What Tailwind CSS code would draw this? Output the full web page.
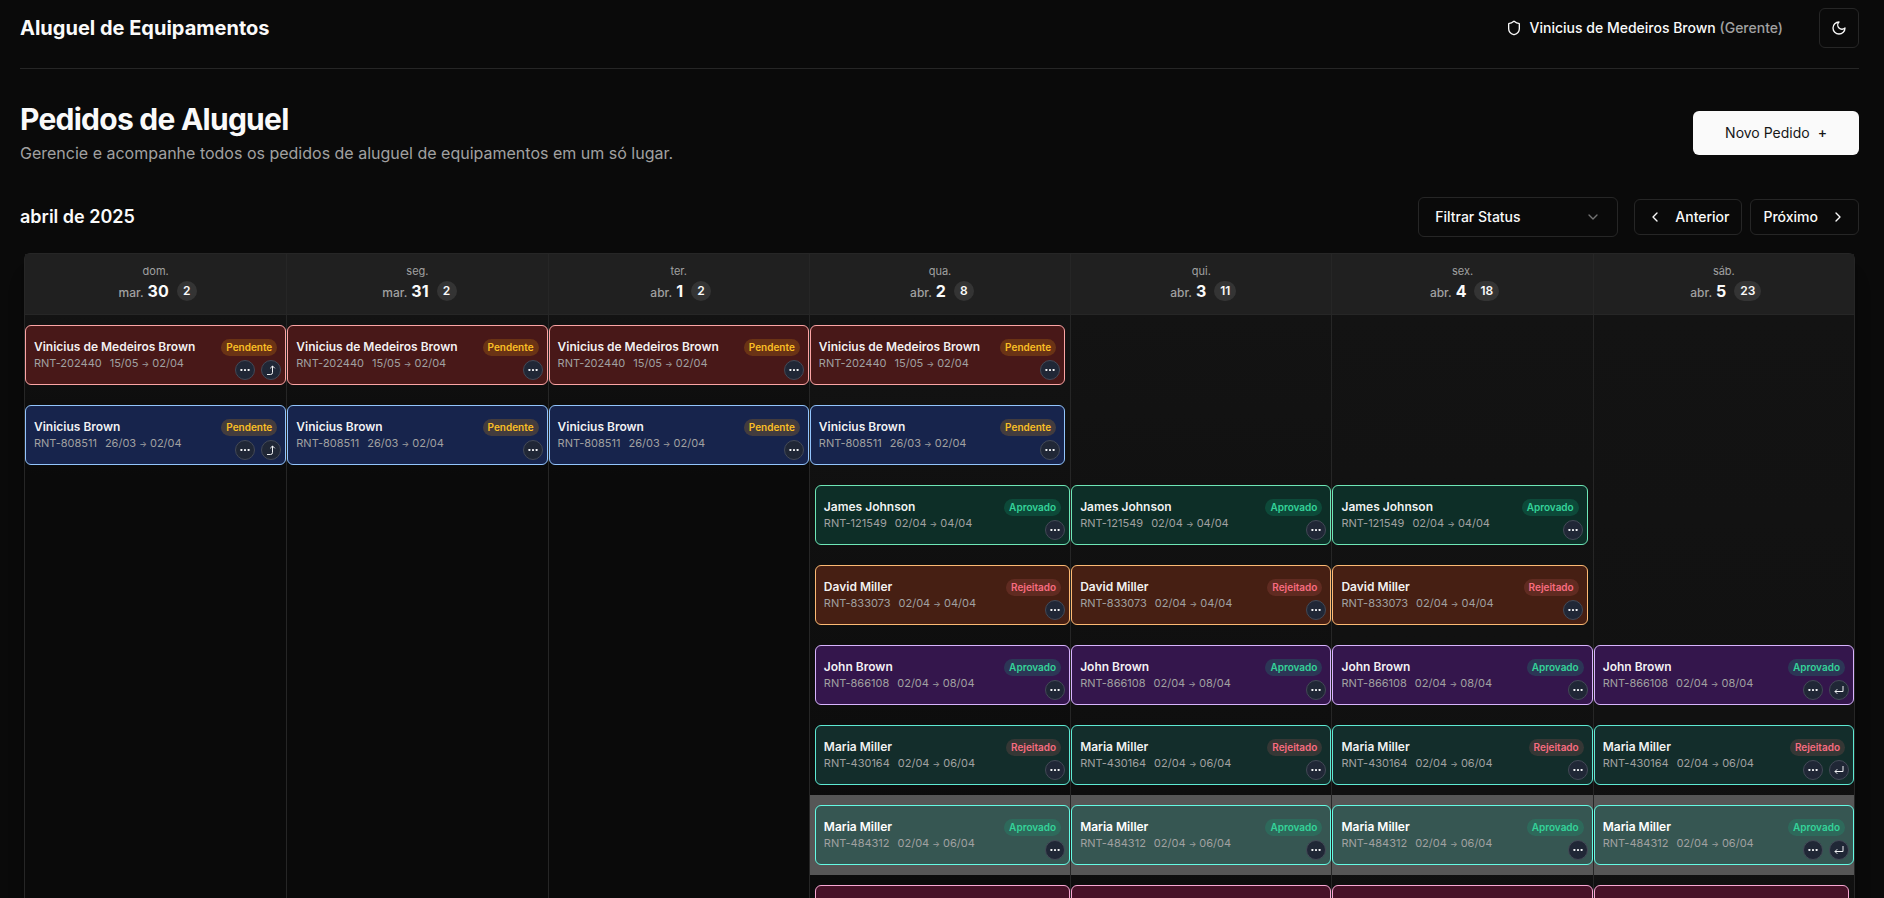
<!DOCTYPE html>
<html lang="pt-BR">
<head>
<meta charset="utf-8">
<title>Aluguel de Equipamentos</title>
<script src="https://cdn.jsdelivr.net/npm/@tailwindcss/browser@4"></script>
</head>
<body class="bg-[#0a0a0a] font-['Inter',sans-serif] text-neutral-50 antialiased">
<div class="flex h-screen flex-col overflow-hidden pl-5 pr-[25px]">
  <header class="flex shrink-0 items-center justify-between border-b border-neutral-800 pt-2 pb-5">
    <a href="#" class="text-xl font-bold">Aluguel de Equipamentos</a>
    <div class="flex items-center gap-9">
      <div class="flex items-center gap-2 text-sm">
        <svg class="size-4" viewBox="0 0 24 24" fill="none" stroke="currentColor" stroke-width="2" stroke-linecap="round" stroke-linejoin="round"><path d="M20 13c0 5-3.500 7.500-7.660 8.950a1 1 0 0 1-.67-.01C7.500 20.500 4 18 4 13V6a1 1 0 0 1 1-1c2 0 4.500-1.200 6.240-2.720a1.170 1.170 0 0 1 1.520 0C14.510 3.810 17 5 19 5a1 1 0 0 1 1 1z"/></svg>
        <span class="font-medium">Vinicius de Medeiros Brown <span class="text-neutral-400">(Gerente)</span></span>
      </div>
      <button type="button" aria-label="Alternar tema" class="flex size-10 items-center justify-center rounded-md border border-neutral-800">
        <svg class="size-4" viewBox="0 0 24 24" fill="none" stroke="currentColor" stroke-width="2" stroke-linecap="round" stroke-linejoin="round"><path d="M12 3a6 6 0 0 0 9 9 9 9 0 1 1-9-9Z"/></svg>
      </button>
    </div>
  </header>

  <main class="flex min-h-0 flex-1 flex-col pt-8">
    <div class="flex shrink-0 items-center justify-between">
      <div class="flex flex-col gap-1">
        <h1 class="text-3xl font-bold tracking-tight">Pedidos de Aluguel</h1>
        <p class="text-base text-neutral-400">Gerencie e acompanhe todos os pedidos de aluguel de equipamentos em um só lugar.</p>
      </div>
      <button type="button" class="flex h-11 items-center gap-2 rounded-md bg-neutral-50 px-8 text-sm text-neutral-900">Novo Pedido <span class="font-medium">+</span></button>
    </div>

    <div class="mt-8 flex shrink-0 items-center justify-between">
      <h2 class="text-lg font-semibold">abril de 2025</h2>
      <div class="flex items-center gap-4">
        <div class="grid items-center">
          <select aria-label="Filtrar Status" class="col-start-1 row-start-1 h-10 w-[200px] appearance-none rounded-md border border-neutral-800 bg-transparent px-4 text-sm font-medium">
            <option>Filtrar Status</option>
          </select>
          <svg class="pointer-events-none col-start-1 row-start-1 mr-[17px] size-4 justify-self-end text-neutral-500" viewBox="0 0 24 24" fill="none" stroke="currentColor" stroke-width="2" stroke-linecap="round" stroke-linejoin="round"><path d="m6 9 6 6 6-6"/></svg>
        </div>
        <div class="flex items-center gap-2">
          <button type="button" class="flex h-9 items-center gap-3 rounded-md border border-neutral-800 px-3 text-sm font-medium">
            <svg class="size-4" viewBox="0 0 24 24" fill="none" stroke="currentColor" stroke-width="2" stroke-linecap="round" stroke-linejoin="round"><path d="m15 18-6-6 6-6"/></svg>
            Anterior
          </button>
          <button type="button" class="flex h-9 items-center gap-3 rounded-md border border-neutral-800 px-3 text-sm font-medium">
            Próximo
            <svg class="size-4" viewBox="0 0 24 24" fill="none" stroke="currentColor" stroke-width="2" stroke-linecap="round" stroke-linejoin="round"><path d="m9 18 6-6-6-6"/></svg>
          </button>
        </div>
      </div>
    </div>

    <section aria-label="Calendário" class="mx-1 mt-4 flex flex-1 flex-col rounded-md border border-neutral-800 shadow-xl">
      <div id="days" class="grid grid-cols-7 border-b border-neutral-800 bg-[#202020]"></div>
      <div id="columns" class="grid flex-1 grid-cols-7"></div>
    </section>
  </main>
</div>

<script>
const days = [
  ['dom.', 'mar.', 30, 2], ['seg.', 'mar.', 31, 2], ['ter.', 'abr.', 1, 2], ['qua.', 'abr.', 2, 8],
  ['qui.', 'abr.', 3, 11], ['sex.', 'abr.', 4, 18], ['sáb.', 'abr.', 5, 23],
];
const amber = 'bg-[#f59e0b]/20 text-[#fbbf24]';
const emerald = 'bg-[#10b981]/20 text-[#34d399]';
const rose = 'bg-[#f87171]/15 text-[#f86c80]';
// from/to are column indexes; before/after mark orders that go on outside the week.
const orders = [
  { name: 'Vinicius de Medeiros Brown', id: 'RNT-202440', start: '15/05', end: '02/04', status: 'Pendente', pill: amber, from: 0, to: 3, before: true, color: 'border-[#fca5a5] bg-[#481818]' },
  { name: 'Vinicius Brown', id: 'RNT-808511', start: '26/03', end: '02/04', status: 'Pendente', pill: amber, from: 0, to: 3, before: true, color: 'border-[#93c5fd] bg-[#17244c]' },
  { name: 'James Johnson', id: 'RNT-121549', start: '02/04', end: '04/04', status: 'Aprovado', pill: emerald, from: 3, to: 5, color: 'border-[#6ee7b7] bg-[#0d2e27]' },
  { name: 'David Miller', id: 'RNT-833073', start: '02/04', end: '04/04', status: 'Rejeitado', pill: rose, from: 3, to: 5, color: 'border-[#fdba74] bg-[#461f13]' },
  { name: 'John Brown', id: 'RNT-866108', start: '02/04', end: '08/04', status: 'Aprovado', pill: emerald, from: 3, to: 6, after: true, color: 'border-[#d8b4fe] bg-[#34164c]' },
  { name: 'Maria Miller', id: 'RNT-430164', start: '02/04', end: '06/04', status: 'Rejeitado', pill: rose, from: 3, to: 6, after: true, color: 'border-[#5eead4] bg-[#132d2b]' },
  { name: 'Maria Miller', id: 'RNT-484312', start: '02/04', end: '06/04', status: 'Aprovado', pill: emerald, from: 3, to: 6, after: true, active: true, color: 'border-[#64fbe4] bg-[#365652]' },
  { from: 3, to: 6, color: 'border-[#f9a8d4] bg-[#471228]' },
];
const round = 'flex size-5 items-center justify-center rounded-full border border-[#434956] bg-[#202736] text-gray-100';
const dots = `<button type="button" aria-label="Mais opções" class="${round}"><svg class="size-3" viewBox="0 0 12 12" fill="currentColor"><rect x="1.400" y="5" width="2" height="2" rx=".4"/><rect x="5" y="5" width="2" height="2" rx=".4"/><rect x="8.600" y="5" width="2" height="2" rx=".4"/></svg></button>`;
const jumpBack = `<button type="button" aria-label="Ir para o início" class="${round}"><svg class="size-3" viewBox="0 0 12 12" fill="none" stroke="currentColor"><path d="M2 10.500h3.500q2 0 2-2V2M5.200 4.300 7.500 2 9.800 4.300"/></svg></button>`;
const jumpOn = `<button type="button" aria-label="Ir para o fim" class="${round}"><svg class="size-3" viewBox="0 0 12 12" fill="none" stroke="currentColor"><path d="M10 2v5.500H2M4.300 5.200 2 7.500 4.300 9.800"/></svg></button>`;

document.getElementById('days').innerHTML = days.map(([day, month, n, count], i) => `
  <div class="flex flex-col items-center pt-[9px] pb-[13px] ${i > 0 ? 'border-l border-neutral-800' : ''}">
    <span class="text-[11px] leading-4 text-neutral-400">${day}</span>
    <div class="mt-0.5 flex h-5 items-center pl-1">
      <div class="flex items-baseline gap-1"><span class="text-xs font-medium text-neutral-400">${month}</span><span class="text-base font-bold">${n}</span></div>
      <span class="ml-2 flex h-5 min-w-5 items-center justify-center rounded-full bg-[#343434] px-1.5 text-xs font-semibold">${count}</span>
    </div>
  </div>`).join('');

function card(o, col) {
  const inset = (col === o.from && !o.before ? 'ml-[5px] ' : '') + (col === o.to && !o.after ? 'mr-[5px] ' : '');
  if (!o.name) return `<article class="${inset} h-[60px] rounded-md border ${o.color}"></article>`;
  return `<article class="${inset} relative flex h-[60px] items-center justify-between rounded-md border px-2 ${o.color}">
    <div>
      <h3 class="text-xs font-semibold ${o.active ? 'text-white' : 'text-white/95'}">${o.name}</h3>
      <p class="flex items-center gap-2 text-[11px] leading-4 text-neutral-400"><span>${o.id}</span><span>${o.start} <span class="text-[8px]">→</span> ${o.end}</span></p>
    </div>
    <span class="mb-4 flex h-[17px] items-center rounded-full px-[5px] text-[10px] font-semibold ${o.pill}">${o.status}</span>
    <div class="absolute right-1 bottom-1 flex gap-1.5">${dots}${col === 0 && o.before ? jumpBack : ''}${col === 6 && o.after ? jumpOn : ''}</div>
  </article>`;
}

document.getElementById('columns').innerHTML = days.map(([, , , count], col) => `
  <div class="${col > 0 ? 'border-l border-neutral-800' : ''}">
    <div class="bg-linear-to-b from-[#131313] to-[#0a0a0a]" style="height:${count * 80}px">
      ${orders.map(o => `<div class="h-20 py-2.5 ${o.active && col >= o.from ? 'bg-[#565656]' : ''}">${col >= o.from && col <= o.to ? card(o, col) : ''}</div>`).join('')}
    </div>
  </div>`).join('');
</script>
</body>
</html>
